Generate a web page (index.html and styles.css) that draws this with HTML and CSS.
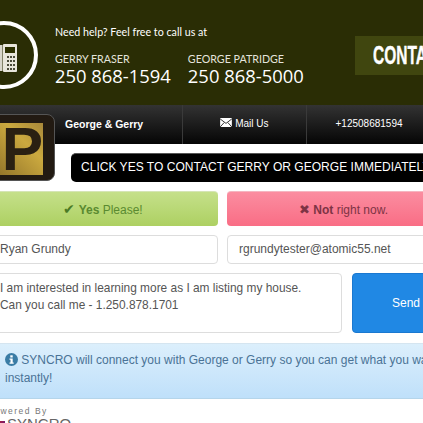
FILE: index.html
```html
<!DOCTYPE html>
<html lang="en">
<head>
    <meta charset="UTF-8">
    <title>George &amp; Gerry</title>
    <link rel="stylesheet" href="styles.css">
</head>
<body>
    <div class="page">
        <header class="top">
            <div class="ring">
                <svg class="phone" width="17" height="28" viewBox="0 0 17 28">
                    <rect x="0" y="1" width="2.500" height="26" fill="#d8d6cc"/>
                    <rect x="3" y="0" width="14" height="28" rx="1" fill="#e8e6dc"/>
                    <rect x="5" y="3" width="10" height="6" fill="#2b2f00"/>
                    <path d="M7 12h2v2H7zM10 12h2v2h-2zM13 12h2v2h-2zM7 16h2v2H7zM10 16h2v2h-2zM13 16h2v2h-2zM7 20h2v2H7zM10 20h2v2h-2zM13 20h2v2h-2zM7 24h2v2H7zM10 24h2v2h-2zM13 24h2v2h-2z" fill="#4a4a3a"/>
                </svg>
            </div>
            <div class="call">
                <p class="help">Need help? Feel free to call us at</p>
                <div class="people">
                    <div class="person">
                        <p class="name">GERRY FRASER</p>
                        <p class="number">250 868-1594</p>
                    </div>
                    <div class="person">
                        <p class="name">GEORGE PATRIDGE</p>
                        <p class="number">250 868-5000</p>
                    </div>
                </div>
            </div>
            <div class="contact-btn"><span>CONTACT US</span></div>
        </header>

        <nav class="nav">
            <div class="nav-item nav-name">George &amp; Gerry</div>
            <div class="nav-item nav-mail">
                <svg width="12" height="9" viewBox="0 0 13 10">
                    <rect width="13" height="10" fill="#fff"/>
                    <path d="M0 1l6.500 5L13 1M0 10l4.500-5M13 10L8.500 5" fill="none" stroke="#222" stroke-width="1"/>
                </svg>
                Mail Us
            </div>
            <div class="nav-item nav-phone">+12508681594</div>
        </nav>

        <div class="brand-row">
            <div class="logo">
                <div class="logo-plate"><span>P</span></div>
            </div>
            <div class="banner">CLICK YES TO CONTACT GERRY OR GEORGE IMMEDIATELY</div>
        </div>

        <div class="row">
            <button class="choice yes"><span class="mark">&#10004;</span> <b>Yes</b> Please!</button>
            <button class="choice no"><span class="mark">&#10006;</span> <b>Not</b> right now.</button>
        </div>

        <div class="row">
            <div class="field">Ryan Grundy</div>
            <div class="field">rgrundytester@atomic55.net</div>
        </div>

        <div class="row">
            <div class="field message">I am interested in learning more as I am listing my house.<br>Can you call me - 1.250.878.1701</div>
            <button class="send">Send</button>
        </div>

        <div class="alert">
            <svg class="info" width="13" height="13" viewBox="0 0 13 13">
                <circle cx="6.500" cy="6.500" r="6.500" fill="#3a7ca5"/>
                <rect x="5.300" y="2.300" width="2.400" height="2.200" fill="#fff"/>
                <path d="M4.500 5.500h3.200v4h1v1.300H4.500V9.500h1V6.800h-1z" fill="#fff"/>
            </svg>
            SYNCRO will connect you with George or Gerry so you can get what you want<br>instantly!
        </div>

        <div class="powered">
            <p class="powered-by">Powered By</p>
            <p class="syncro"><span class="square"></span>SYNCRO</p>
        </div>
    </div>
</body>
</html>
```

FILE: styles.css
```css
*{
    padding: 0;
    margin: 0;
    box-sizing: border-box;
}
html, body{
    width: 423px;
    height: 423px;
    overflow: hidden;
    background-color: #fff;
}
body{
    font-family: 'Liberation Sans', Arial, sans-serif;
    color: #555;
}
.page{
    width: 480px;
    margin-left: -30px;
}
.top{
    height: 105px;
    background-color: #2a2d05;
    display: flex;
    align-items: flex-start;
    color: #fff;
}
.ring{
    width: 68px;
    height: 68px;
    margin-top: 21px;
    border: 4px solid #fff;
    border-radius: 50%;
    flex-shrink: 0;
    padding: 19px 0 0 10px;
}
.phone{
    display: block;
    margin-left: 16px;
}
.call{
    margin-left: 17px;
    width: 300px;
    font-family: 'Lato', sans-serif;
    flex-shrink: 0;
}
.help{
    font-size: 10.700px;
    margin-top: 25px;
}
.people{
    display: flex;
    gap: 17px;
    margin-top: 14px;
}
.name{
    font-size: 10.700px;
    line-height: 14px;
    color: #e4e4dc;
}
.number{
    font-family: 'Open Sans', sans-serif;
    font-size: 18.400px;
    line-height: 20px;
    font-weight: 500;
}
.contact-btn{
    margin-top: 36px;
    width: 130px;
    height: 39px;
    flex-shrink: 0;
    background-color: #40460f;
    padding-left: 18px;
    overflow: hidden;
    font-weight: bold;
    font-size: 25px;
    line-height: 39px;
    white-space: nowrap;
    -webkit-text-stroke: 0.4px #fff;
}
.contact-btn span{
    display: inline-block;
    transform: scaleX(0.62);
    transform-origin: left center;
}
.nav{
    height: 39px;
    display: flex;
    background: linear-gradient(#333 0%, #1c1c1c 50%, #050505 100%);
    color: #fff;
    font-size: 10px;
    line-height: 38px;
}
.nav-item{
    text-align: center;
    border-right: 1px solid #3a3a3a;
}
.nav-name{
    width: 213px;
    padding-left: 95px;
    text-align: left;
    font-weight: bold;
    font-size: 10.500px;
}
.nav-mail{
    width: 124px;
}
.nav-phone{
    width: 124px;
    border: none;
}
.brand-row{
    height: 47px;
    display: flex;
    align-items: flex-start;
}
.logo{
    width: 85px;
    height: 67px;
    margin-top: -30px;
    background-color: #221a12;
    border: 1px solid #555;
    border-radius: 8px;
    padding: 8px 11px 5px 0;
    flex-shrink: 0;
}
.logo-plate{
    height: 100%;
    background: linear-gradient(45deg, #7a5d20, #cba93f 70%, #a8883a);
    text-align: right;
    overflow: hidden;
}
.logo-plate span{
    font-size: 62px;
    font-weight: bold;
    line-height: 52px;
    color: #2a2012;
}
.banner{
    margin: 9px 0 0 16px;
    height: 29px;
    padding-left: 10px;
    flex-shrink: 0;
    width: 400px;
    background-color: #000;
    border-top: 1px solid #555;
    border-radius: 5px;
    color: #fff;
    font-size: 12.050px;
    line-height: 27px;
    white-space: nowrap;
    overflow: hidden;
}
.row{
    display: flex;
    gap: 9px;
    margin-bottom: 9px;
}
.row > *{
    flex-shrink: 0;
}
.choice{
    width: 248px;
    height: 35px;
    border: none;
    border-radius: 4px;
    font-family: inherit;
    font-size: 12px;
}
.yes{
    background: linear-gradient(#c5e08a, #add062);
    color: #5a8a30;
    border-top: 1px solid #d5e5b5;
    padding-left: 18px;
}
.yes .mark{
    font-size: 14px;
    color: #4a7a25;
}
.mark{
    font-size: 13px;
}
.no{
    width: 300px;
    background: linear-gradient(#fb8da0, #f96d85);
    color: #7d3344;
    border-top: 1px solid #f5b5c0;
    text-align: left;
    padding-left: 72px;
}
.field{
    width: 248px;
    height: 29px;
    padding-left: 29px;
    border: 1px solid #ddd;
    border-radius: 4px;
    background-color: #fff;
    font-size: 12px;
    line-height: 27px;
    color: #555;
}
.field + .field{
    width: 300px;
    padding-left: 11px;
}
.message{
    width: 372px;
    height: 60px;
    padding-top: 6px;
    font-size: 11.900px;
    line-height: 17px;
    margin-right: 1px;
}
.send{
    width: 110px;
    height: 60px;
    border: 1px solid #1a78d0;
    border-radius: 4px;
    background-color: #2088e4;
    color: #fff;
    font-family: inherit;
    font-size: 12px;
    text-align: left;
    padding-left: 39px;
}
.alert{
    height: 56px;
    padding: 8px 0 0 35px;
    background: linear-gradient(#dceffc, #bfe0fa);
    border-top: 1px solid #d5e5f0;
    border-bottom: 1px solid #b5d5ea;
    color: #4a7396;
    font-size: 12px;
    line-height: 17.500px;
    margin-top: 10px;
    width: 480px;
    white-space: nowrap;
    overflow: hidden;
}
.info{
    vertical-align: -2px;
}
.powered{
    padding-left: 17px;
    margin-top: 7px;
    color: #777;
}
.powered-by{
    font-size: 8.500px;
    letter-spacing: 1.500px;
    line-height: 10px;
}
.syncro{
    font-size: 15px;
    line-height: 12px;
    margin-top: 2px;
    color: #666;
    padding-left: 10px;
}
.square{
    display: inline-block;
    width: 8px;
    height: 8px;
    margin-right: 2px;
    background: linear-gradient(135deg, #c2202a, #7a1a6a 55%, #2a2a8a);
}
```
